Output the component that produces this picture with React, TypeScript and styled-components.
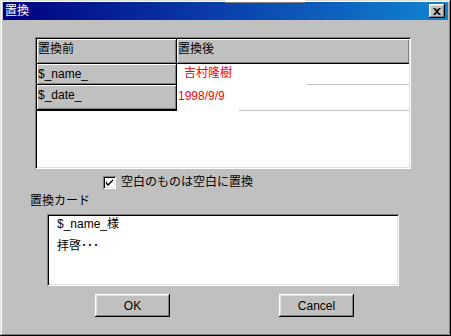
import * as React from 'react';
import styled, { createGlobalStyle } from 'styled-components';

const GlobalStyle = createGlobalStyle`
  html, body {
    margin: 0;
    padding: 0;
    background: #c0c0c0;
  }
  body {
    font-family: "Liberation Sans", "Noto Sans CJK JP", sans-serif;
    font-size: 12px;
    color: #000;
  }
`;

const raised = `
  box-shadow: inset -1px -1px #000, inset 1px 1px #fff, inset -2px -2px #808080, inset 2px 2px #dfdfdf;
`;

const sunken = `
  box-shadow: inset 1px 1px #808080, inset -1px -1px #fff, inset 2px 2px #000, inset -2px -2px #dfdfdf;
`;

const Window = styled.div`
  position: relative;
  box-sizing: border-box;
  width: 451px;
  height: 336px;
  padding: 2px 3px 0;
  background: #c0c0c0;
  box-shadow: inset -1px -1px #000, inset 1px 1px #dfdfdf, inset -2px -2px #808080, inset 2px 2px #fff;
  display: flex;
  flex-direction: column;
`;

const TitleBar = styled.div`
  height: 18px;
  display: flex;
  align-items: center;
  justify-content: space-between;
  padding: 0 3px 0 2px;
  background: linear-gradient(90deg, #000080 0%, #0a3aa8 45%, #1084d0 100%);
  color: #fff;
  font-size: 12px;
  line-height: 18px;
`;

const Overlap = styled.div`
  position: absolute;
  top: 0;
  left: 225px;
  width: 80px;
  height: 2px;
  background: #fff;
  border-bottom: 1px solid #808080;
`;

const CloseButton = styled.div`
  width: 16px;
  height: 14px;
  background: #c0c0c0;
  ${raised}
  display: flex;
  align-items: center;
  justify-content: center;
`;

const Body = styled.div`
  display: flex;
  flex-direction: column;
  align-items: flex-start;
`;

const GridFrame = styled.div`
  box-sizing: border-box;
  margin: 17px 0 0 32px;
  width: 376px;
  height: 132px;
  padding: 2px 2px 2px 2px;
  background: #fff;
  ${sunken}
`;

const GridRow = styled.div<{ $h: number; $line: string; $lineFrom: number }>`
  display: grid;
  grid-template-columns: 140px 1fr;
  height: ${p => p.$h}px;
  position: relative;
  background: linear-gradient(${p => p.$line}, ${p => p.$line}) no-repeat;
  background-size: calc(100% - ${p => p.$lineFrom}px) 1px;
  background-position: right bottom;
`;

const HeaderCell = styled.div<{ $bottom?: number }>`
  box-sizing: border-box;
  background: #c0c0c0;
  border-right: 1px solid #000;
  border-bottom: ${p => p.$bottom ?? 1}px solid #000;
  box-shadow: inset 1px 1px #fff, inset -1px -1px #808080;
  padding: 3px 0 0 1px;
  line-height: 14px;
  white-space: nowrap;
`;

const ValueCell = styled.div<{ $pad: number; $top: number; $width: number }>`
  box-sizing: border-box;
  width: ${p => p.$width}px;
  background: #fff;
  color: #f00;
  padding: ${p => p.$top}px 0 0 ${p => p.$pad}px;
  line-height: 14px;
  white-space: nowrap;
`;

const CheckRow = styled.label`
  display: flex;
  align-items: center;
  gap: 5px;
  margin: 7px 0 0 100px;
  height: 13px;
  line-height: 13px;
`;

const CheckBox = styled.span`
  box-sizing: border-box;
  width: 13px;
  height: 13px;
  background: #fff;
  ${sunken}
  display: flex;
  align-items: center;
  justify-content: center;
`;

const GroupLabel = styled.div`
  margin: 5px 0 0 27px;
  line-height: 14px;
`;

const Memo = styled.div`
  box-sizing: border-box;
  margin: 6px 0 0 44px;
  width: 352px;
  height: 72px;
  background: #fff;
  padding: 3px 0 0 10px;
  ${sunken}
`;

const MemoLine = styled.div<{ $gap?: number }>`
  line-height: 14px;
  margin-top: ${p => p.$gap ?? 0}px;
  white-space: pre;
`;

const ButtonRow = styled.div`
  display: flex;
  gap: 109px;
  margin: 8px 0 0 92px;
`;

const Button = styled.div`
  box-sizing: border-box;
  width: 75px;
  height: 23px;
  background: #c0c0c0;
  ${raised}
  display: flex;
  align-items: center;
  justify-content: center;
  font-size: 12px;
`;

export default function App() {
  return (
    <>
      <GlobalStyle />
      <Window>
        <Overlap />
        <TitleBar>
          <span>置換</span>
          <CloseButton>
            <svg width="8" height="7" viewBox="0 0 8 7">
              <path d="M0 0h2l2 2 2-2h2L5 3.5 8 7H6L4 5 2 7H0l3-3.5z" fill="#000" />
            </svg>
          </CloseButton>
        </TitleBar>
        <Body>
          <GridFrame>
            <GridRow $h={25} $line="#000" $lineFrom={0}>
              <HeaderCell>置換前</HeaderCell>
              <HeaderCell style={{ borderRight: 'none' }}>置換後</HeaderCell>
            </GridRow>
            <GridRow $h={21} $line="#c0c0c0" $lineFrom={100}>
              <HeaderCell>$_name_</HeaderCell>
              <ValueCell $pad={7} $top={2} $width={130}>吉村隆樹</ValueCell>
            </GridRow>
            <GridRow $h={26} $line="#c0c0c0" $lineFrom={170}>
              <HeaderCell $bottom={2}>$_date_</HeaderCell>
              <ValueCell $pad={1} $top={4} $width={62}>1998/9/9</ValueCell>
            </GridRow>
          </GridFrame>
          <CheckRow>
            <CheckBox>
              <svg width="7" height="7" viewBox="0 0 7 7">
                <path d="M0 2v3l2 2 5-5V0L2 5z" fill="#000" />
              </svg>
            </CheckBox>
            <span>空白のものは空白に置換</span>
          </CheckRow>
          <GroupLabel>置換カード</GroupLabel>
          <Memo>
            <MemoLine>$_name_様</MemoLine>
            <MemoLine $gap={8}>拝啓･･･</MemoLine>
          </Memo>
          <ButtonRow>
            <Button>OK</Button>
            <Button>Cancel</Button>
          </ButtonRow>
        </Body>
      </Window>
    </>
  );
}
